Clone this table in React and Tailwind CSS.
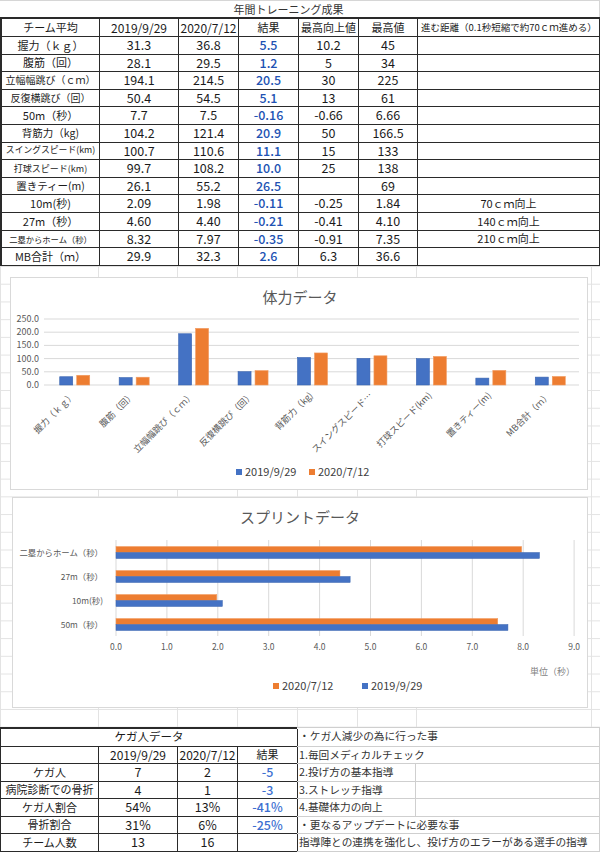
import React from "react";

const FONT = "'Noto Sans CJK JP', 'Noto Sans', sans-serif";

const topRows = [
  ["握力（ｋｇ）", "31.3", "36.8", "5.5", "10.2", "45", "", "text-[11px]"],
  ["腹筋（回）", "28.1", "29.5", "1.2", "5", "34", "", "text-[11px]"],
  ["立幅幅跳び（ｃｍ）", "194.1", "214.5", "20.5", "30", "225", "", "text-[10px]"],
  ["反復横跳び（回）", "50.4", "54.5", "5.1", "13", "61", "", "text-[10px]"],
  ["50m（秒）", "7.7", "7.5", "-0.16", "-0.66", "6.66", "", "text-[11px]"],
  ["背筋力（kg)", "104.2", "121.4", "20.9", "50", "166.5", "", "text-[10.5px]"],
  ["スイングスピード(km)", "100.7", "110.6", "11.1", "15", "133", "", "text-[8.8px]"],
  ["打球スピード(km)", "99.7", "108.2", "10.0", "25", "138", "", "text-[9px]"],
  ["置きティー(m)", "26.1", "55.2", "26.5", "", "69", "", "text-[10.5px]"],
  ["10m(秒)", "2.09", "1.98", "-0.11", "-0.25", "1.84", "70ｃｍ向上", "text-[11px]"],
  ["27m（秒）", "4.60", "4.40", "-0.21", "-0.41", "4.10", "140ｃｍ向上", "text-[11px]"],
  ["二塁からホーム（秒）", "8.32", "7.97", "-0.35", "-0.91", "7.35", "210ｃｍ向上", "text-[8.3px]"],
  ["MB合計（ｍ）", "29.9", "32.3", "2.6", "6.3", "36.6", "", "text-[11px]"],
];

const BLUE = "#4472C4";
const ORANGE = "#ED7D31";

const cell = "flex items-center justify-center border-r border-b border-[#2a2a2a] leading-none text-[#1b1b1b] whitespace-nowrap";

function TopTable() {
  return (
    <div>
      <div className="h-[17px] flex items-center justify-center pr-[22px] text-[11px] leading-none text-[#333] border-t border-r border-[#d6d6d6]">
        年間トレーニング成果
      </div>
      <div className="grid grid-cols-[98px_79px_60px_60px_60px_59px_1fr] grid-rows-[18px_repeat(13,17.6px)] border-t-2 border-l-2 border-[#2a2a2a]">
        <div className={cell + " text-[11px]"}>チーム平均</div>
        <div className={cell + " text-[12px]"}>2019/9/29</div>
        <div className={cell + " text-[12px]"}>2020/7/12</div>
        <div className={cell + " text-[11px]"}>結果</div>
        <div className={cell + " text-[11px]"}>最高向上値</div>
        <div className={cell + " text-[11px]"}>最高値</div>
        <div className={cell + " justify-start pl-[3px] text-[9.5px]"}>進む距離（0.1秒短縮で約70ｃｍ進める）</div>
        {topRows.map((r, i) => (
          <React.Fragment key={i}>
            <div className={cell + " " + r[7]}>{r[0]}</div>
            <div className={cell + " text-[12.5px]"}>{r[1]}</div>
            <div className={cell + " text-[12.5px]"}>{r[2]}</div>
            <div className={cell + " text-[12.5px] !text-[#2152b3] font-medium"}>{r[3]}</div>
            <div className={cell + " text-[12.5px]"}>{r[4]}</div>
            <div className={cell + " text-[12.5px]"}>{r[5]}</div>
            <div className={cell + " text-[11px]"}>{r[6]}</div>
          </React.Fragment>
        ))}
      </div>
    </div>
  );
}

const fitCats = [
  "握力（ｋｇ）",
  "腹筋（回）",
  "立幅幅跳び（ｃｍ）",
  "反復横跳び（回）",
  "背筋力（kg)",
  "スイングスピード…",
  "打球スピード(km)",
  "置きティー(m)",
  "MB合計（ｍ）",
];
const fit2019 = [31.3, 28.1, 194.1, 50.4, 104.2, 100.7, 99.7, 26.1, 29.9];
const fit2020 = [36.8, 29.5, 214.5, 54.5, 121.4, 110.6, 108.2, 55.2, 32.3];

function FitnessChart() {
  const left = 33;
  const right = 568;
  const zero = 107;
  const k = 66 / 250;
  const cw = (right - left) / 9;
  return (
    <div className="w-[578px] h-[213px] bg-white border border-[#d9d9d9]">
      <svg width="576" height="211" fontFamily={FONT}>
        <text x="289" y="25" fontSize="15" fill="#595959" textAnchor="middle">体力データ</text>
        {[0, 50, 100, 150, 200, 250].map((v) => (
          <g key={v}>
            <line x1={left} x2={right} y1={zero - v * k} y2={zero - v * k} stroke="#d9d9d9" strokeWidth="1" />
            <text x="28" y={zero - v * k + 3} fontSize="9" fill="#595959" textAnchor="end">{v.toFixed(1)}</text>
          </g>
        ))}
        {fitCats.map((c, i) => {
          const cx = left + cw * (i + 0.5) + 1;
          const h1 = fit2019[i] * k;
          const h2 = fit2020[i] * k;
          return (
            <g key={c}>
              <rect x={cx - 15} y={zero - h1} width="13" height={h1} fill={BLUE} stroke="#3a64b0" strokeWidth="0.6" />
              <rect x={cx + 2} y={zero - h2} width="13" height={h2} fill={ORANGE} stroke="#f29b60" strokeWidth="0.6" />
              <text transform={`translate(${cx + 1},${zero + 11}) rotate(-45)`} fontSize="9" fill="#595959" textAnchor="end">{c}</text>
            </g>
          );
        })}
        <rect x="225" y="191" width="6" height="6" fill={BLUE} />
        <text x="234" y="198" fontSize="11" fill="#404040">2019/9/29</text>
        <rect x="298" y="191" width="6" height="6" fill={ORANGE} />
        <text x="307" y="198" fontSize="11" fill="#404040">2020/7/12</text>
      </svg>
    </div>
  );
}

const sprintCats = ["二塁からホーム（秒）", "27m（秒）", "10m(秒)", "50m（秒）"];
const sprint2020 = [7.97, 4.4, 1.98, 7.5];
const sprint2019 = [8.32, 4.6, 2.09, 7.7];

function SprintChart() {
  const x0 = 103;
  const u = 50.9;
  return (
    <div className="w-[576px] h-[211px] bg-white border border-[#d9d9d9]">
      <svg width="574" height="209" fontFamily={FONT}>
        <text x="287" y="25" fontSize="15" fill="#595959" textAnchor="middle">スプリントデータ</text>
        {[0, 1, 2, 3, 4, 5, 6, 7, 8, 9].map((v) => (
          <g key={v}>
            <line x1={x0 + v * u} x2={x0 + v * u} y1="42" y2="138" stroke="#d9d9d9" strokeWidth="1" />
            <text x={x0 + v * u} y="152" fontSize="8.5" fill="#595959" textAnchor="middle">{v.toFixed(1)}</text>
          </g>
        ))}
        {sprintCats.map((c, i) => {
          const cy = 54.5 + i * 24;
          return (
            <g key={c}>
              <rect x={x0} y={cy - 6} width={sprint2020[i] * u} height="6" fill={ORANGE} stroke="#f29b60" strokeWidth="0.5" />
              <rect x={x0} y={cy} width={sprint2019[i] * u} height="6" fill={BLUE} stroke="#3a64b0" strokeWidth="0.5" />
              <text x="90" y={cy + 3} fontSize="8.4" fill="#595959" textAnchor="end">{c}</text>
            </g>
          );
        })}
        <text x="562" y="177" fontSize="9" fill="#7f7f7f" textAnchor="end">単位（秒）</text>
        <rect x="260" y="185" width="6" height="6" fill={ORANGE} />
        <text x="269" y="192" fontSize="11" fill="#404040">2020/7/12</text>
        <rect x="349" y="185" width="6" height="6" fill={BLUE} />
        <text x="358" y="192" fontSize="11" fill="#404040">2019/9/29</text>
      </svg>
    </div>
  );
}

function MiddleSheet() {
  return (
    <div className="h-[461px] pt-[11px] pl-[10px] [background-image:linear-gradient(to_bottom,#e3e3e3_1px,transparent_1px),linear-gradient(to_right,#e3e3e3_1px,transparent_1px,transparent_98px,#e3e3e3_98px,#e3e3e3_99px,transparent_99px,transparent_177px,#e3e3e3_177px,#e3e3e3_178px,transparent_178px,transparent_237px,#e3e3e3_237px,#e3e3e3_238px,transparent_238px,transparent_297px,#e3e3e3_297px,#e3e3e3_298px,transparent_298px,transparent_357px,#e3e3e3_357px,#e3e3e3_358px,transparent_358px,transparent_416px,#e3e3e3_416px,#e3e3e3_417px,transparent_417px,transparent_591px,#e3e3e3_591px,#e3e3e3_592px,transparent_592px)] [background-size:100%_17.73px,100%_100%]">
      <FitnessChart />
      <div className="mt-[7px] ml-[2px]">
        <SprintChart />
      </div>
    </div>
  );
}

const injuryRows = [
  ["ケガ人", "7", "2", "-5"],
  ["病院診断での骨折", "4", "1", "-3"],
  ["ケガ人割合", "54%", "13%", "-41%"],
  ["骨折割合", "31%", "6%", "-25%"],
  ["チーム人数", "13", "16", ""],
];

const bcell = "flex items-center justify-center border-r border-b border-[#2a2a2a] leading-none text-[#1b1b1b] whitespace-nowrap";
const rcell = "flex items-center border-r border-b border-[#cfcfcf] text-[10.7px] leading-none text-[#333] whitespace-nowrap pl-[2px]";

function InjurySection() {
  return (
    <div className="flex">
      <div className="w-[297px] grid grid-cols-[98px_79px_60px_60px] grid-rows-[18px_repeat(6,17.5px)] border-t-2 border-l border-[#2a2a2a]">
        <div className={bcell + " col-span-4 text-[11.5px]"}>ケガ人データ</div>
        <div className={bcell}></div>
        <div className={bcell + " text-[12px]"}>2019/9/29</div>
        <div className={bcell + " text-[12px]"}>2020/7/12</div>
        <div className={bcell + " text-[11px]"}>結果</div>
        {injuryRows.map((r) => (
          <React.Fragment key={r[0]}>
            <div className={bcell + " text-[11px]"}>{r[0]}</div>
            <div className={bcell + " text-[12.5px]"}>{r[1]}</div>
            <div className={bcell + " text-[12.5px]"}>{r[2]}</div>
            <div className={bcell + " text-[12.5px] !text-[#3d6fd1] font-medium"}>{r[3]}</div>
          </React.Fragment>
        ))}
      </div>
      <div className="flex-1 grid grid-cols-[119px_1fr] grid-rows-[19px_repeat(6,17.5px)] border-t border-[#cfcfcf]">
        <div className={rcell + " col-span-2"}>・ケガ人減少の為に行った事</div>
        <div className={rcell + " col-span-2"}>1.毎回メディカルチェック</div>
        <div className={rcell}>2.投げ方の基本指導</div>
        <div className={rcell}></div>
        <div className={rcell}>3.ストレッチ指導</div>
        <div className={rcell}></div>
        <div className={rcell}>4.基礎体力の向上</div>
        <div className={rcell}></div>
        <div className={rcell + " col-span-2"}>・更なるアップデートに必要な事</div>
        <div className={rcell + " col-span-2"}>指導陣との連携を強化し、投げ方のエラーがある選手の指導</div>
      </div>
    </div>
  );
}

export default function App() {
  return (
    <div className="w-[600px] h-[852px] overflow-hidden bg-white font-['Noto_Sans_CJK_JP',sans-serif]">
      <TopTable />
      <MiddleSheet />
      <InjurySection />
    </div>
  );
}
